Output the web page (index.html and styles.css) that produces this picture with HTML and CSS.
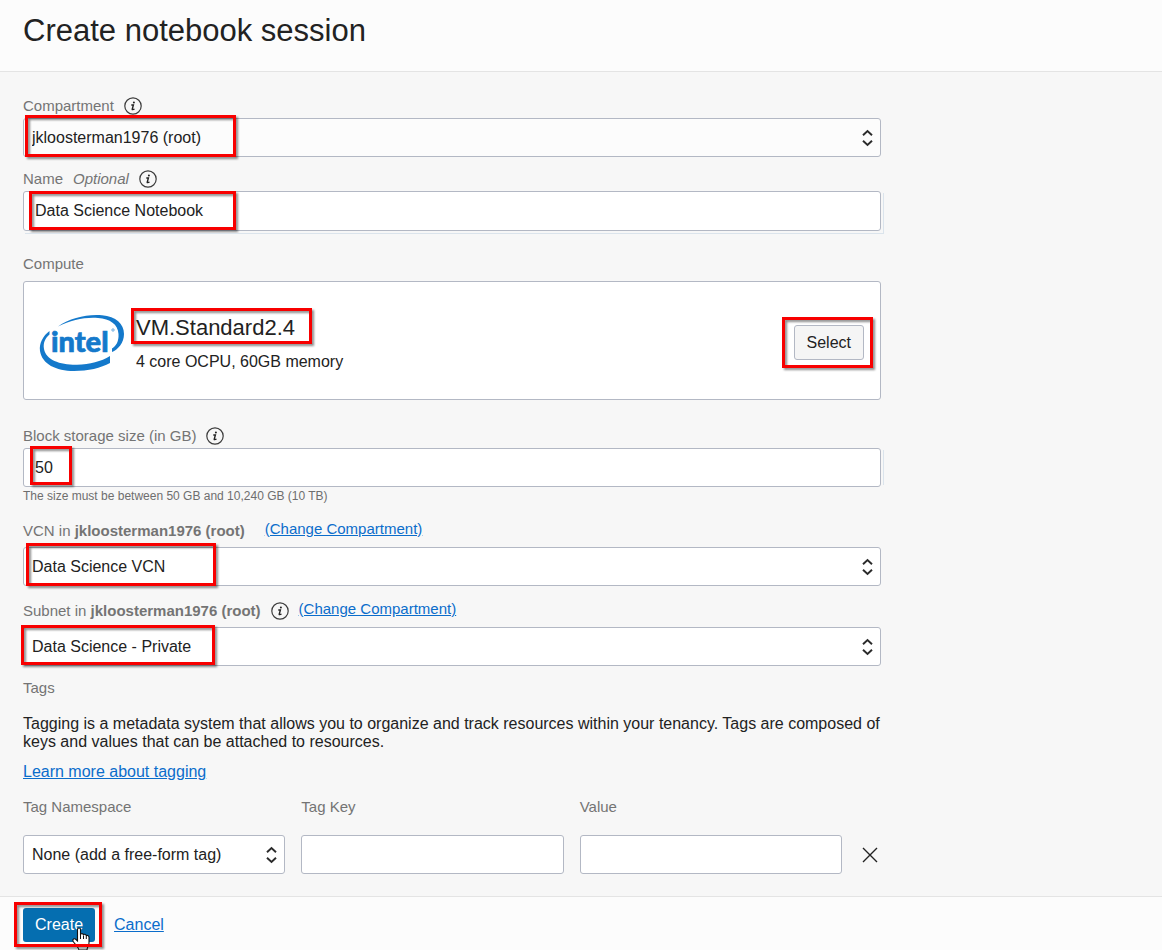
FILE: index.html
```html
<!DOCTYPE html>
<html lang="en">
<head>
<meta charset="utf-8">
<title>Create notebook session</title>
<meta name="viewport" content="width=device-width, initial-scale=1">
<link rel="stylesheet" href="styles.css">
</head>
<body>
<svg class="defs" aria-hidden="true">
  <symbol id="info" viewBox="0 0 18 18">
    <circle cx="9" cy="9" r="8.2" fill="none" stroke="#3c3c3c" stroke-width="1.2"/>
    <circle cx="9.9" cy="5.4" r="1" fill="#222"/>
    <path d="M7.300 8H9.400L8.200 12.300Q8.300 13 10.500 12.200" fill="none" stroke="#222" stroke-width="1.400"/>
  </symbol>
  <symbol id="updown" viewBox="0 0 11 18">
    <path d="M1 6.300 5.500 2 10 6.300M1 11.700 5.500 16 10 11.700" fill="none" stroke="#2b2b2b" stroke-width="1.900"/>
  </symbol>
</svg>

<header class="header">
  <h1 class="title">Create notebook session</h1>
</header>

<form class="main" id="session-form">
  <div class="content">
    <div class="label-row">
      <label for="compartment">Compartment</label>
      <svg class="info"><use href="#info"/></svg>
    </div>
    <div class="field compartment">
      <select class="control muted" id="compartment"><option>jkloosterman1976 (root)</option></select>
      <svg class="updown"><use href="#updown"/></svg>
      <span class="mark mark-compartment"></span>
    </div>

    <div class="label-row">
      <label for="name">Name</label>
      <em>Optional</em>
      <svg class="info"><use href="#info"/></svg>
    </div>
    <div class="field name edged edged-bottom">
      <input class="control text" id="name" type="text" value="Data Science Notebook">
      <span class="mark mark-name"></span>
    </div>

    <h2 class="section">Compute</h2>
    <div class="card">
      <svg class="logo" viewBox="0 0 84 56" role="img" aria-label="intel">
        <path d="M18 11.500C30 3 47-1 62 .3 76 1.600 84 9 84 19 84 28 78 34.500 72 37V33.500C76 31 79 26.500 78.500 19 78 9 70 4 58 3 45 2 31 5 18 11.500Z" fill="#1479cb"/>
        <path d="M9.500 16V19.500C5 23.500 3 28 4 34 6 45 20 50 37 49.800 50 49.500 61 46.500 70 41V48C61 53 48 56 34 56 16 56 2 49 0 36-1 28 3 21 9.500 16Z" fill="#1479cb"/>
        <text class="logo-text" x="11" y="37">intel</text>
        <circle cx="73" cy="15" r="1.200" fill="none" stroke="#1479cb" stroke-width=".6"/>
      </svg>
      <div class="shape">
        <div class="shape-name">VM.Standard2.4<span class="mark mark-shape"></span></div>
        <div class="shape-info">4 core OCPU, 60GB memory</div>
      </div>
      <div class="choose">
        <button class="select-button" type="button">Select</button>
        <span class="mark mark-choose"></span>
      </div>
    </div>

    <div class="label-row">
      <label for="storage">Block storage size (in GB)</label>
      <svg class="info"><use href="#info"/></svg>
    </div>
    <div class="field edged">
      <input class="control text" id="storage" type="text" value="50" aria-describedby="storage-help">
      <span class="mark mark-storage"></span>
    </div>
    <p class="help" id="storage-help">The size must be between 50 GB and 10,240 GB (10 TB)</p>

    <div class="label-row network">
      <label for="vcn">VCN in <b>jkloosterman1976 (root)</b></label>
      <a class="change spaced" href="#">(Change Compartment)</a>
    </div>
    <div class="field vcn">
      <select class="control" id="vcn"><option>Data Science VCN</option></select>
      <svg class="updown"><use href="#updown"/></svg>
      <span class="mark mark-vcn"></span>
    </div>

    <div class="label-row network">
      <label for="subnet">Subnet in <b>jkloosterman1976 (root)</b></label>
      <svg class="info"><use href="#info"/></svg>
      <a class="change" href="#">(Change Compartment)</a>
    </div>
    <div class="field">
      <select class="control" id="subnet"><option>Data Science - Private</option></select>
      <svg class="updown"><use href="#updown"/></svg>
      <span class="mark mark-subnet"></span>
    </div>

    <h2 class="section tags-title">Tags</h2>
    <p class="copy">Tagging is a metadata system that allows you to organize and track resources within your tenancy. Tags are composed of keys and values that can be attached to resources.</p>
    <p class="copy learn"><a href="#">Learn more about tagging</a></p>

    <div class="tags">
      <label for="tag-namespace">Tag Namespace</label>
      <label for="tag-key">Tag Key</label>
      <label for="tag-value">Value</label>
      <span></span>
      <div class="field">
        <select class="control" id="tag-namespace"><option>None (add a free-form tag)</option></select>
        <svg class="updown"><use href="#updown"/></svg>
      </div>
      <div class="field"><input class="control text" id="tag-key" type="text"></div>
      <div class="field"><input class="control text" id="tag-value" type="text"></div>
      <button class="remove" type="button" aria-label="Remove tag">
        <svg class="cross" viewBox="0 0 16 16"><path d="M1 1 15 15M15 1 1 15" stroke="#222" stroke-width="1.4"/></svg>
      </button>
    </div>
  </div>
</form>

<footer class="footer">
  <div class="create-wrap">
    <button class="create" type="submit" form="session-form">Create</button>
    <svg class="pointer" viewBox="0 0 18 24" aria-hidden="true">
      <path d="M5.500 14V2.500C5.500.5 8.500.5 8.500 2.500V8C8.500 6 11.500 6.200 11.500 8.200 11.500 6.700 14.300 7 14.300 9 14.300 8 17 8.200 17 10.200V16C17 19 15 20 15 23H7C6.500 20 3.500 18 1.200 14.500 0 12 2.500 11 4 12.500Z" fill="#fff" stroke="#111" stroke-width="1.100"/>
      <path d="M8.500 8V12M11.500 8.500V12M14.300 9V12" stroke="#111" stroke-width="1"/>
    </svg>
    <span class="mark mark-create"></span>
  </div>
  <a href="#">Cancel</a>
</footer>
</body>
</html>
```

FILE: styles.css
```css
* { box-sizing: border-box; }

body {
  margin: 0;
  min-height: 100vh;
  display: flex;
  flex-direction: column;
  background: #f7f7f7;
  color: #222;
  font: 16px/18px "Liberation Sans", Arial, sans-serif;
}

.defs { position: absolute; width: 0; height: 0; }

a { color: #0b6dcb; text-decoration: underline; }

.header {
  padding: 11px 23px 20px;
  background: #fcfcfc;
  border-bottom: 1px solid #e4e4e4;
}

.title { margin: 0; font-size: 31px; line-height: 40px; font-weight: 400; }

.main { flex: 1; padding: 25px 23px 21px; }
.content { max-width: 858px; }

.label-row,
.section,
.tags label {
  font-size: 15px;
  line-height: 18px;
  font-weight: 400;
  color: #747474;
}

.label-row {
  display: flex;
  align-items: center;
  gap: 10px;
  height: 18px;
  margin-bottom: 3px;
}

.info { flex: none; width: 18px; height: 18px; }

.field { position: relative; }
.compartment { margin-bottom: 13px; }
.name { margin-bottom: 24px; }
.vcn { margin-bottom: 16px; }

.control {
  display: block;
  width: 100%;
  height: 39px;
  margin: 0;
  padding: 0 28px 0 8px;
  border: 1px solid #b3b8c4;
  border-radius: 3px;
  background: #fff;
  color: #222;
  font: inherit;
  appearance: none;
}

.control.text { padding: 0 11px; }
.control.muted { background: #fcfcfc; }
.name .control { height: 40px; }

.updown {
  position: absolute;
  right: 8px;
  top: 50%;
  width: 11px;
  height: 18px;
  margin-top: -9px;
  pointer-events: none;
}

.edged::after {
  content: "";
  position: absolute;
  inset: 2px -3px 2px 2px;
  border-right: 1px solid #dbe4ec;
  pointer-events: none;
}

.edged-bottom::after { bottom: -3px; border-bottom: 1px solid #dbe4ec; }

.section { margin: 0 0 8px; }

.card {
  display: flex;
  align-items: center;
  gap: 12px;
  min-height: 119px;
  margin-bottom: 27px;
  padding: 4px 16px 0;
  border: 1px solid #b3b8c4;
  border-radius: 3px;
  background: #fff;
}

.logo { flex: none; width: 84px; height: 56px; overflow: visible; }
.logo-text {
  font: 900 29px Lato, sans-serif;
  fill: #1479cb;
  stroke: #1479cb;
  stroke-width: .7px;
}
.shape { flex: 1; }
.shape-name { position: relative; margin-bottom: 9px; font-size: 22px; line-height: 30px; }
.shape-info { line-height: 20px; }
.choose { position: relative; }

.select-button {
  display: block;
  height: 35px;
  padding: 0 12px;
  border: 1px solid #b3b8c4;
  border-radius: 3px;
  background: #f5f5f5;
  color: #222;
  font: inherit;
}

.help { margin: 0 0 17px; font-size: 12px; line-height: 18px; color: #6e6e6e; }

.network { margin-bottom: 7px; }
.network .change { padding-bottom: 4px; }
.change.spaced { margin-left: 10px; }

.tags-title { margin: 13px 0 18px; }
.copy { margin: 0 0 12px; }
.learn { margin-bottom: 17px; }

.tags {
  display: grid;
  grid-template-columns: 1fr 1fr 1fr 23px;
  column-gap: 16px;
  row-gap: 19px;
}

.remove {
  display: grid;
  place-items: center;
  padding: 0;
  border: 0;
  background: none;
}

.cross { width: 16px; height: 16px; }

.footer {
  display: flex;
  align-items: center;
  gap: 19px;
  height: 54px;
  padding: 3px 23px 0;
  overflow: hidden;
  background: #fcfcfc;
  border-top: 1px solid #e4e4e4;
}

.create-wrap { position: relative; }

.create {
  display: block;
  height: 34px;
  padding: 0 12px;
  border: 0;
  border-radius: 3px;
  background: #056eb0;
  color: #fff;
  font: inherit;
}

.pointer { position: absolute; left: 49px; top: 19px; width: 18px; height: 24px; }

/* Callout rectangles drawn over the highlighted controls */
.mark {
  position: absolute;
  border: 3px solid #f80000;
  filter: drop-shadow(2px 2px 1px rgba(0, 0, 0, .45));
  pointer-events: none;
}

.mark-compartment { left: 2px; top: -3px; width: 211px; height: 42px; }
.mark-name { left: 6px; top: 0; width: 207px; height: 39px; }
.mark-shape { left: -5px; top: -5px; width: 181px; height: 36px; }
.mark-choose { inset: -8px -9px -8px -12px; }
.mark-storage { left: 7px; top: -2px; width: 42px; height: 39px; }
.mark-vcn { left: 3px; top: -4px; width: 190px; height: 43px; }
.mark-subnet { left: -2px; top: -2px; width: 194px; height: 40px; }
.mark-create { inset: -6px -7px -5px -9px; }
```
